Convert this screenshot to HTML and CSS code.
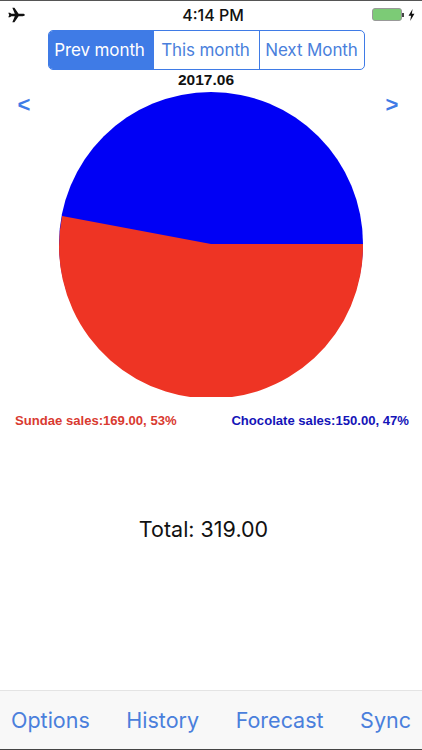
FILE: index.html
```html
<!DOCTYPE html>
<html lang="en">
<head>
    <meta charset="UTF-8">
    <meta name="viewport" content="width=device-width, initial-scale=1.0">
    <title>Sales</title>
    <link rel="stylesheet" href="styles.css">
</head>
<body>
    <div class="screen">
        <!-- Status bar -->
        <div class="status-bar">
            <svg class="plane" width="17" height="16" viewBox="0 0 18 16">
                <path d="M0.3 5.6 L2 5.6 L3.6 6.8 L7.2 6.8 L4.6 0.2 L6.8 0.2 L11.2 6.8 L15.5 6.8 C16.9 6.8 17.8 7.4 17.8 8 C17.8 8.6 16.9 9.2 15.5 9.2 L11.2 9.2 L6.8 15.8 L4.6 15.8 L7.2 9.2 L3.6 9.2 L2 10.4 L0.3 10.4 L1.3 8 Z"/>
            </svg>
            <span class="clock">4:14 PM</span>
            <div class="battery-group">
                <div class="battery"></div>
                <div class="battery-tip"></div>
                <svg class="bolt" width="7" height="12" viewBox="0 0 6 11">
                    <path d="M4 0 L0.3 6.2 L2.6 6.2 L1.8 11 L5.7 4.4 L3.3 4.4 Z"/>
                </svg>
            </div>
        </div>

        <!-- Month selector -->
        <div class="segments">
            <div class="segment active">Prev month</div>
            <div class="segment">This month</div>
            <div class="segment">Next Month</div>
        </div>

        <div class="period">2017.06</div>

        <!-- Pie chart -->
        <div class="chart-row">
            <span class="arrow">&lt;</span>
            <svg class="pie" width="306" height="306" viewBox="-1 -1 306 306">
                <circle cx="152" cy="152" r="152" fill="#0000f5"/>
                <path d="M152 152 L304 152 A152 152 0 1 1 3.1 124 Z" fill="#ee3424"/>
            </svg>
            <span class="arrow">&gt;</span>
        </div>

        <div class="legend">
            <span class="legend-red">Sundae sales:169.00, 53%</span>
            <span class="legend-blue">Chocolate sales:150.00, 47%</span>
        </div>

        <div class="total">Total: 319.00</div>

        <!-- Bottom toolbar -->
        <div class="toolbar">
            <span>Options</span>
            <span>History</span>
            <span>Forecast</span>
            <span>Sync</span>
        </div>
    </div>
</body>
</html>
```

FILE: styles.css
```css
:root {
    --blue: #3f7be6;
    --text-blue: #4a7fdc;
}

* {
    margin: 0;
    padding: 0;
    box-sizing: border-box;
}

body {
    background-color: white;
    font-family: 'Liberation Sans', Arial, sans-serif;
}

.screen {
    width: 422px;
    height: 750px;
    display: flex;
    flex-direction: column;
    border-top: 1px solid #555;
    border-bottom: 1px solid #444;
    overflow: hidden;
}

.status-bar {
    height: 29px;
    display: flex;
    align-items: center;
    justify-content: space-between;
    padding: 0 7px 2px 8px;
    position: relative;
}

.plane {
    fill: #111;
}

.clock {
    position: absolute;
    left: 4px;
    right: 0;
    text-align: center;
    font-size: 16px;
    font-weight: 500;
    color: #111;
    font-family: Inter, 'Liberation Sans', sans-serif;
}

.battery-group {
    display: flex;
    align-items: center;
}

.battery {
    width: 30px;
    height: 13px;
    border: 1px solid #999;
    border-radius: 3px;
    background-color: #7ccb76;
}

.battery-tip {
    width: 2px;
    height: 4px;
    background-color: #444;
    margin-right: 4px;
}

.bolt {
    fill: #111;
}

.segments {
    display: flex;
    width: 317px;
    height: 40px;
    margin-left: 48px;
    border: 1px solid var(--blue);
    border-radius: 5px;
    overflow: hidden;
}

.segment {
    flex: 0 0 106px;
    display: flex;
    align-items: center;
    justify-content: center;
    padding-right: 2px;
    font-size: 17px;
    letter-spacing: -0.1px;
    color: var(--text-blue);
    border-left: 1px solid var(--blue);
    font-family: Inter, 'Liberation Sans', sans-serif;
    white-space: nowrap;
}

.segment:first-child {
    flex-basis: 104px;
    padding-right: 3px;
    border-left: none;
}

.segment.active {
    background-color: var(--blue);
    color: white;
}

.period {
    height: 21px;
    line-height: 19px;
    padding-right: 10px;
    text-align: center;
    font-size: 15.5px;
    font-weight: bold;
    color: #111;
}

.chart-row {
    display: flex;
    justify-content: space-between;
    align-items: flex-start;
    padding: 0 23px 0 17px;
}

.arrow {
    width: 14px;
    margin-top: 1px;
    font-size: 22px;
    line-height: 26px;
    font-weight: bold;
    color: var(--blue);
    text-align: center;
}

.pie {
    display: block;
    margin-left: 27px;
    margin-right: 21px;
}

.legend {
    display: flex;
    justify-content: space-between;
    margin-top: 16px;
    padding: 0 13px 0 15px;
    font-size: 13.1px;
    line-height: 16px;
    font-weight: bold;
}

.legend-red {
    color: #d93a30;
}

.legend-blue {
    color: #1414b8;
}

.total {
    margin-top: 86px;
    text-align: center;
    font-size: 21.5px;
    line-height: 28px;
    color: #111;
    padding-right: 15px;
    font-family: Inter, 'Liberation Sans', sans-serif;
}

.toolbar {
    margin-top: auto;
    height: 59px;
    display: flex;
    align-items: center;
    justify-content: space-between;
    padding: 0 11px;
    background-color: #f8f8f8;
    border-top: 1px solid #e4e4e4;
    font-size: 21.5px;
    color: var(--text-blue);
    font-family: Inter, 'Liberation Sans', sans-serif;
}
```
